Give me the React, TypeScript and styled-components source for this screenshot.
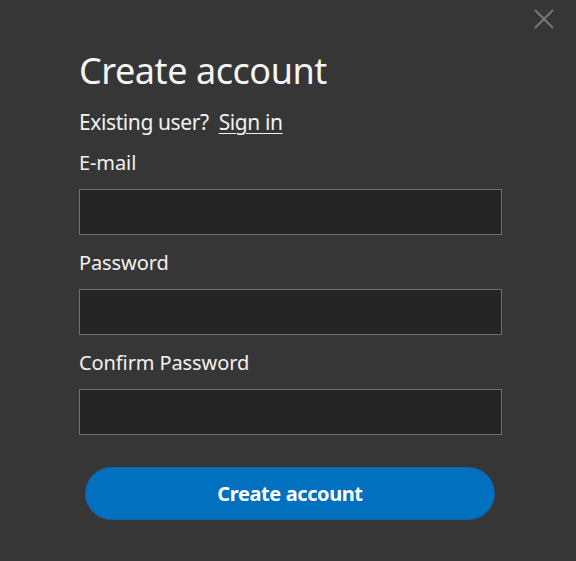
import React from "react";
import styled, { createGlobalStyle } from "styled-components";

const Global = createGlobalStyle`
  html, body { margin: 0; padding: 0; background: #363636; }
  body { font-family: "Noto Sans", "Liberation Sans", sans-serif; color: #f2f2f2; }
  * { box-sizing: border-box; }
`;

const Page = styled.div`
  position: relative;
  width: 576px;
  height: 561px;
  background: #363636;
  padding: 49px 0 0 79px;
  overflow: hidden;
`;

const Close = styled.button`
  position: absolute;
  top: 9px;
  right: 22px;
  width: 20px;
  height: 20px;
  padding: 0;
  border: none;
  background: transparent;
  cursor: pointer;
  display: flex;
`;

const Form = styled.form`
  width: 423px;
  display: flex;
  flex-direction: column;
`;

const Title = styled.h1`
  margin: 0;
  font-size: 36px;
  line-height: 44px;
  font-weight: 400;
  color: #f5f5f5;
  letter-spacing: -0.45px;
`;

const Existing = styled.p`
  margin: 16px 0 0;
  font-size: 21px;
  line-height: 26px;
  letter-spacing: -0.4px;
  color: #f2f2f2;
  display: flex;
  gap: 10px;
`;

const SignIn = styled.a`
  color: #f2f2f2;
  text-decoration: underline;
  text-underline-offset: 3px;
  text-decoration-thickness: 1px;
  cursor: pointer;
`;

const Field = styled.label`
  display: flex;
  flex-direction: column;
  gap: 14px;
  margin-top: 16px;
`;

const LabelText = styled.span`
  font-size: 20px;
  line-height: 24px;
  letter-spacing: -0.1px;
  color: #f2f2f2;
`;

const Input = styled.input`
  width: 100%;
  height: 46px;
  background: #252525;
  border: 1px solid #6f6f6f;
  outline: none;
  color: #fff;
  font-size: 18px;
  padding: 0 10px;
  font-family: inherit;
`;

const Submit = styled.button`
  margin: 32px 7px 0 6px;
  height: 53px;
  border-radius: 27px;
  background: #0070bf;
  border: 1px solid #1562a0;
  color: #ffffff;
  font-family: inherit;
  font-size: 20px;
  font-weight: 700;
  letter-spacing: -0.4px;
  cursor: pointer;
`;

export default function App() {
  return (
    <>
      <Global />
      <Page>
        <Close aria-label="Close" type="button">
          <svg width="20" height="20" viewBox="0 0 20 20">
            <path d="M1 1 L19 19 M19 1 L1 19" stroke="#7a7a7a" strokeWidth="2" fill="none" />
          </svg>
        </Close>
        <Form onSubmit={(e) => e.preventDefault()}>
          <Title>Create account</Title>
          <Existing>
            <span>Existing user?</span>
            <SignIn>Sign in</SignIn>
          </Existing>
          <Field>
            <LabelText>E-mail</LabelText>
            <Input type="email" />
          </Field>
          <Field>
            <LabelText>Password</LabelText>
            <Input type="password" />
          </Field>
          <Field>
            <LabelText>Confirm Password</LabelText>
            <Input type="password" />
          </Field>
          <Submit type="submit">Create account</Submit>
        </Form>
      </Page>
    </>
  );
}
